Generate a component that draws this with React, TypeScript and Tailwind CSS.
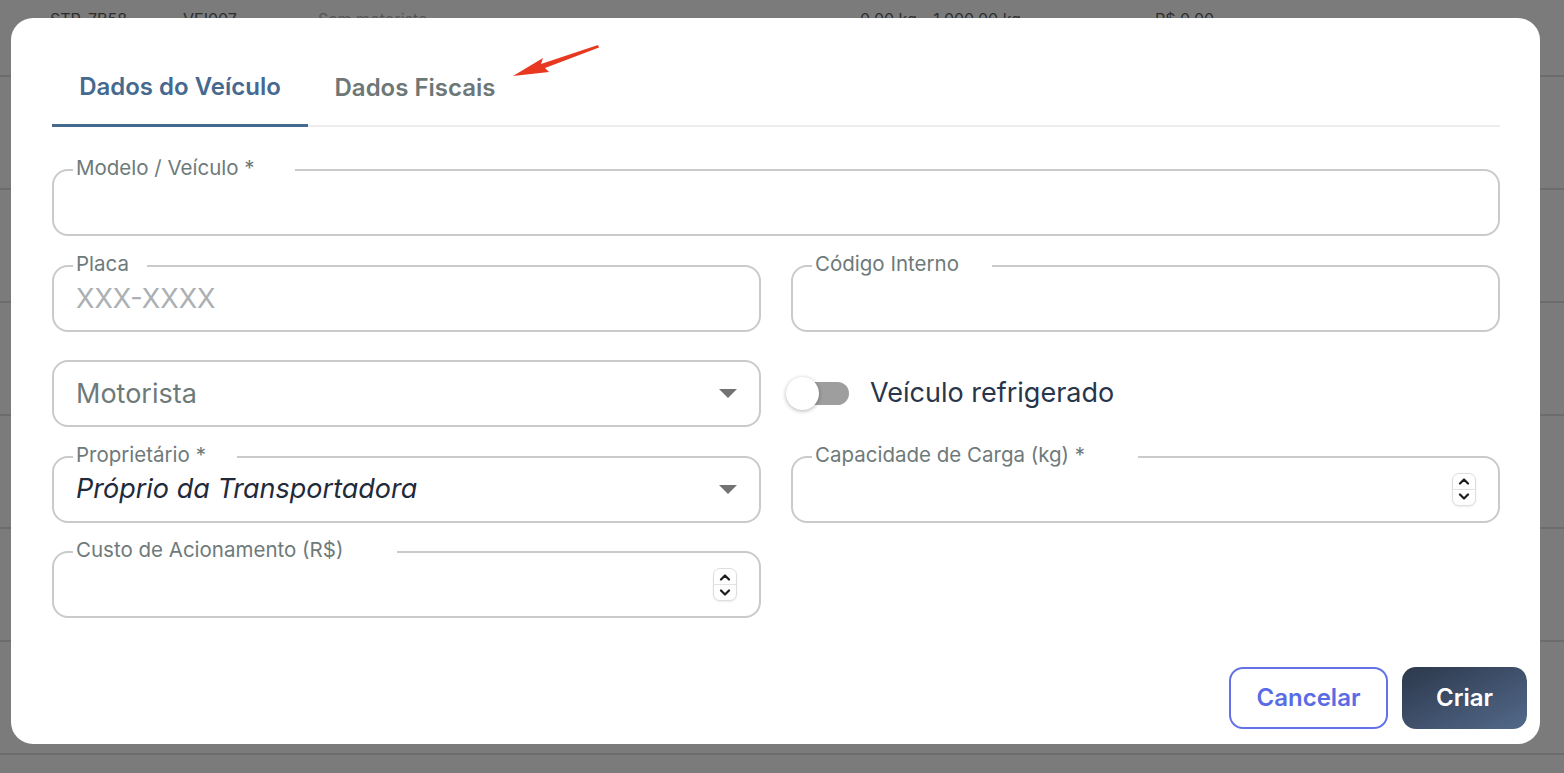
import React from "react";

const font = { fontFamily: "Inter, 'Noto Sans', sans-serif" };

function Spinner() {
  return (
    <div className="flex h-[33px] w-[24px] flex-col overflow-hidden rounded-[7px] border border-[#dedede] bg-white shadow-[0_1px_2px_rgba(0,0,0,0.08)]">
      <div className="flex flex-1 items-center justify-center border-b border-[#e3e3e3]">
        <svg width="12" height="8" viewBox="0 0 12 8">
          <path d="M2 6.5 L6 2.5 L10 6.5" fill="none" stroke="#1d1d1d" strokeWidth="2.2" strokeLinecap="round" strokeLinejoin="round" />
        </svg>
      </div>
      <div className="flex flex-1 items-center justify-center">
        <svg width="12" height="8" viewBox="0 0 12 8">
          <path d="M2 1.5 L6 5.5 L10 1.5" fill="none" stroke="#1d1d1d" strokeWidth="2.2" strokeLinecap="round" strokeLinejoin="round" />
        </svg>
      </div>
    </div>
  );
}

function Caret() {
  return (
    <svg width="18" height="9" viewBox="0 0 18 9" className="shrink-0">
      <polygon points="0,0 18,0 9,9" fill="#737373" />
    </svg>
  );
}

function Field({
  label,
  notch,
  children,
}: {
  label?: string;
  notch?: string;
  children?: React.ReactNode;
}) {
  return (
    <div className="relative flex h-[67px] items-center rounded-[16px] border-2 border-[#cacaca] bg-white pl-[22px] pr-[22px]">
      {label && (
        <span
          className={`absolute -top-[16px] left-[19px] h-[26px] bg-white pl-[3px] text-[20.5px] leading-[26px] whitespace-nowrap text-[#6e7a7a] ${notch}`}
        >
          {label}
        </span>
      )}
      {children}
    </div>
  );
}

const bgRows = [0, 1, 2, 3, 4, 5];

export default function App() {
  return (
    <div className="relative h-[773px] w-[1564px] overflow-hidden bg-[#7b7b7b]" style={font}>
      {/* dimmed table behind the dialog */}
      <div className="flex flex-col">
        <div className="flex h-[77px] border-b-2 border-[#6c6c6c] pt-[7px] text-[16px] leading-[24px] text-[#2e2e2e]">
          <span className="ml-[50px] w-[133px]">STR-7B58</span>
          <span className="w-[135px]">VEI007</span>
          <span className="w-[542px] text-[#555]">Sem motorista</span>
          <span className="w-[295px]">0,00 kg - 1.000,00 kg</span>
          <span>R$ 0,00</span>
        </div>
        {bgRows.map((r) => (
          <div key={r} className="h-[113px] border-b-2 border-[#6c6c6c]" />
        ))}
      </div>

      {/* dialog */}
      <div className="absolute inset-0 flex items-start">
        <div className="ml-[11px] mt-[18px] flex h-[726px] w-[1529px] flex-col rounded-[22px] bg-white">
          <div className="pl-[41px] pr-[40px] pt-[29px]">
            <div className="flex border-b-2 border-[#ededed]">
              <button className="-mb-[2px] flex h-[80px] w-[256px] items-center justify-center border-b-[3px] border-[#46698f] pt-[3px] text-[24px] font-semibold text-[#46698f]">
                Dados do Veículo
              </button>
              <button className="flex h-[78px] w-[214px] items-center justify-center pt-[3px] text-[24px] font-semibold text-[#6d7777]">
                Dados Fiscais
              </button>
            </div>

            <div className="mt-[42px] grid grid-cols-2 gap-x-[30px] gap-y-[28.5px]">
              <div className="col-span-2">
                <Field label="Modelo / Veículo *" notch="w-[222px]" />
              </div>

              <Field label="Placa" notch="w-[74px]">
                <span className="pt-[2px] text-[27px] text-[#aab0b3]">XXX-XXXX</span>
              </Field>
              <Field label="Código Interno" notch="w-[180px]" />

              <Field>
                <span className="flex-1 pt-[2px] text-[27px] text-[#6e7a7a]">Motorista</span>
                <Caret />
              </Field>
              <div className="flex h-[67px] items-center">
                <div className="relative ml-[-5px] flex h-[34px] w-[64px] items-center">
                  <div className="ml-[14px] h-[23px] w-[49px] rounded-full bg-[#9e9e9e]" />
                  <div className="absolute left-0 top-0 h-[33px] w-[33px] rounded-full bg-white shadow-[0_1px_4px_rgba(0,0,0,0.3)]" />
                </div>
                <span className="ml-[20px] text-[27px] text-[#28354a]">Veículo refrigerado</span>
              </div>

              <Field label="Proprietário *" notch="w-[164px]">
                <span className="flex-1 text-[27px] italic text-[#1f2a3b]">Próprio da Transportadora</span>
                <Caret />
              </Field>
              <Field label="Capacidade de Carga (kg) *" notch="w-[326px]">
                <div className="flex-1" />
                <Spinner />
              </Field>

              <Field label="Custo de Acionamento (R$)" notch="w-[324px]">
                <div className="flex-1" />
                <Spinner />
              </Field>
            </div>
          </div>

          <div className="mt-auto flex justify-end gap-[14px] pb-[15px] pr-[13px]">
            <button className="h-[62px] w-[159px] rounded-[14px] border-2 border-[#6373e7] text-[24px] font-semibold text-[#5a6ce3]">
              Cancelar
            </button>
            <button className="h-[62px] w-[125px] rounded-[14px] bg-gradient-to-br from-[#2c384c] to-[#536a8b] text-[24px] font-semibold text-white">
              Criar
            </button>
          </div>
        </div>
      </div>

      {/* annotation arrow */}
      <svg className="pointer-events-none absolute left-0 top-0" width="1564" height="773">
        <polygon points="513,76 543,58 541,64 598,45 599,47.5 545,68 549,72" fill="#e8381f" />
      </svg>
    </div>
  );
}
